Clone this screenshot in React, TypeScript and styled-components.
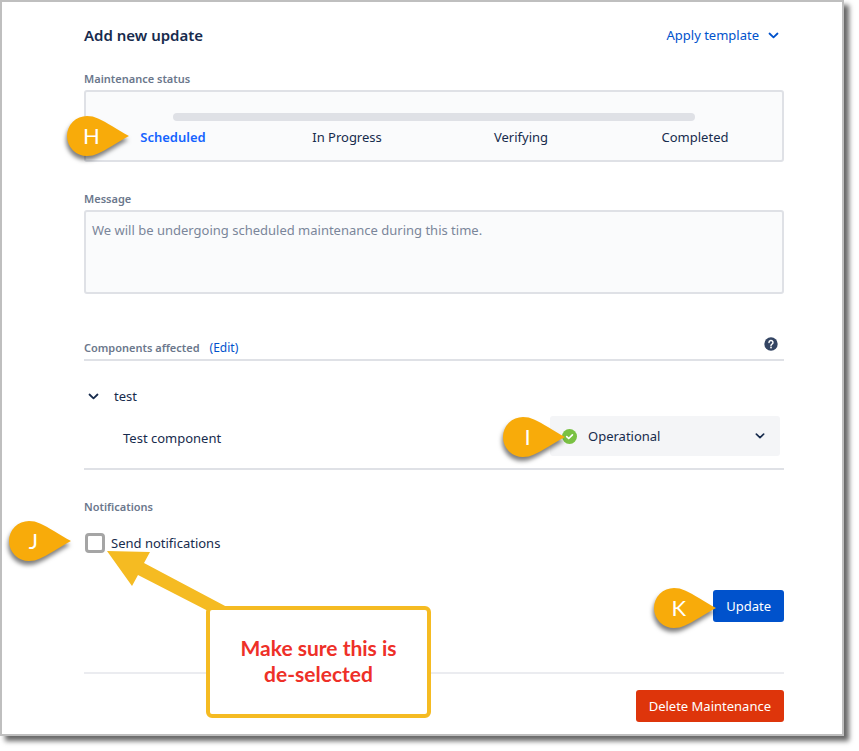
import React from "react";
import styled, { createGlobalStyle } from "styled-components";

const colors = {
  ink: "#172b4d",
  muted: "#6b778c",
  line: "#dfe1e6",
  field: "#fafbfc",
  link: "#0052cc",
  active: "#1463ff",
  danger: "#de350b",
  marker: "#f8ab0a",
  note: "#f5bb22",
};

const GlobalStyle = createGlobalStyle`
  *, *::before, *::after { box-sizing: border-box; }
  body {
    margin: 0;
    background: #fff;
    color: ${colors.ink};
    font-family: "Noto Sans", "Segoe UI", "Open Sans", sans-serif;
    font-size: 13px;
    line-height: 20px;
  }
  button, select, textarea, input { font: inherit; color: inherit; }
`;

const Frame = styled.main`
  margin: 0 15px 15px 0;
  padding: 23px 58px 12px 82px;
  border: 2px solid #bfbfbf;
  background: #fff;
  box-shadow: 5px 5px 5px 0 rgba(0, 0, 0, 0.6);
`;

const Header = styled.header`
  display: flex;
  align-items: center;
  justify-content: space-between;
  height: 20px;
  margin-bottom: 26px;
`;

const Title = styled.h1`
  margin: 0;
  font-size: 15px;
  font-weight: 600;
`;

const TemplateButton = styled.button`
  display: flex;
  align-items: center;
  gap: 9px;
  padding: 0 5px 0 0;
  border: 0;
  background: none;
  color: ${colors.link};
  cursor: pointer;
`;

const Section = styled.section<{ $space: number }>`
  margin-bottom: ${(p) => p.$space}px;
`;

const Caption = styled.h2`
  display: block;
  margin: 0;
  padding-bottom: 3px;
  font-size: 11px;
  font-weight: 600;
  line-height: 16px;
  color: ${colors.muted};
`;

const StatusBox = styled.div`
  position: relative;
  height: 72px;
  padding-top: 21px;
  border: 2px solid ${colors.line};
  border-radius: 3px;
  background: ${colors.field};
`;

const Track = styled.div`
  height: 8px;
  margin: 0 12.5%;
  border-radius: 4px;
  background: ${colors.line};
`;

const Steps = styled.div`
  display: grid;
  grid-template-columns: repeat(4, 1fr);
  padding-top: 6px;
`;

const Step = styled.button<{ $active?: boolean }>`
  padding: 0;
  border: 0;
  background: none;
  text-align: center;
  font-weight: ${(p) => (p.$active ? 600 : 400)};
  color: ${(p) => (p.$active ? colors.active : colors.ink)};
  cursor: pointer;
`;

const Message = styled.textarea`
  display: block;
  width: 100%;
  height: 84px;
  padding: 8px 6px;
  border: 2px solid ${colors.line};
  border-radius: 3px;
  background: ${colors.field};
  color: #7a869a;
  resize: none;
`;

const ComponentsHeader = styled.div`
  display: flex;
  align-items: flex-end;
  justify-content: space-between;
  height: 24px;
  border-bottom: 2px solid ${colors.line};
`;

const CaptionGroup = styled.div`
  display: flex;
  align-items: flex-start;
  gap: 10px;
`;

const EditLink = styled.a`
  font-size: 12px;
  line-height: 16px;
  color: ${colors.link};
  text-decoration: none;
`;

const HelpButton = styled.button`
  display: flex;
  align-self: flex-start;
  padding: 0 6px 0 0;
  border: 0;
  background: none;
  cursor: pointer;
`;

const ComponentsBody = styled.div`
  padding: 25px 0 12px;
  border-bottom: 2px solid ${colors.line};
`;

const GroupToggle = styled.button`
  display: flex;
  align-items: center;
  gap: 15px;
  margin-bottom: 10px;
  padding: 0 0 0 4px;
  border: 0;
  background: none;
  cursor: pointer;
`;

const ComponentRow = styled.div`
  display: flex;
  align-items: center;
  justify-content: space-between;
  padding: 0 4px 0 39px;
`;

const ComponentName = styled.label`
  padding-top: 4px;
`;

const SelectWrap = styled.div`
  position: relative;
  width: 230px;
`;

const StatusSelect = styled.select`
  display: block;
  width: 100%;
  height: 40px;
  padding: 0 38px;
  border: 0;
  border-radius: 3px;
  background: #f4f5f7;
  appearance: none;
`;

const SelectIcon = styled.span<{ $side: "left" | "right" }>`
  position: absolute;
  top: 0;
  bottom: 0;
  ${(p) => (p.$side === "left" ? "left: 12px;" : "right: 15px;")}
  display: flex;
  align-items: center;
  pointer-events: none;
`;

const CheckRow = styled.div`
  position: relative;
  display: flex;
  align-items: center;
  gap: 6px;
  width: fit-content;
  margin-top: 15px;
`;

const CheckBox = styled.input`
  width: 20px;
  height: 20px;
  margin: 0 0 0 1px;
  border: 3px solid #a5a5a5;
  border-radius: 4px;
  background: #fff;
  appearance: none;
`;

const Actions = styled.div`
  display: flex;
  justify-content: flex-end;
`;

const Anchor = styled.div`
  position: relative;
`;

const ActionButton = styled.button<{ $tone: string }>`
  height: 32px;
  padding: 0 13px;
  border: 0;
  border-radius: 3px;
  background: ${(p) => p.$tone};
  color: #fff;
  cursor: pointer;
`;

const Divider = styled.hr`
  height: 2px;
  margin: 50px 0 16px;
  border: 0;
  background: #ebecf0;
`;

const MarkerShape = styled.div<{ $left: number; $top: number }>`
  position: absolute;
  z-index: 2;
  left: ${(p) => p.$left}px;
  top: ${(p) => p.$top}px;
  width: 62px;
  height: 40px;
  pointer-events: none;

  svg {
    display: block;
    overflow: visible;
    filter: drop-shadow(-1px 4px 2px rgba(0, 0, 0, 0.5));
  }
`;

const MarkerLetter = styled.span`
  position: absolute;
  inset: 0 13px 0 0;
  display: flex;
  align-items: center;
  justify-content: center;
  color: #fff;
  font-family: "Segoe UI", Lato, sans-serif;
  font-size: 22px;
`;

const Note = styled.aside`
  position: absolute;
  z-index: 1;
  left: 122px;
  top: 73px;
  display: flex;
  align-items: center;
  justify-content: center;
  width: 225px;
  height: 112px;
  padding-bottom: 2px;
  border: 4px solid ${colors.note};
  border-radius: 6px;
  background: #fff;
  color: #ee3028;
  font-family: "Trebuchet MS", Lato, sans-serif;
  font-size: 21px;
  font-weight: 700;
  line-height: 26px;
  text-align: center;
`;

const NoteArrow = styled.svg`
  position: absolute;
  z-index: 1;
  left: 23px;
  top: 18px;
  pointer-events: none;
`;

function Chevron({ size = 11 }: { size?: number }) {
  return (
    <svg width={size} height={size} viewBox="0 0 11 11" fill="none" stroke="currentColor" strokeWidth="1.8" strokeLinecap="round" strokeLinejoin="round" aria-hidden="true">
      <path d="M1.5 3.5 5.5 7.3 9.5 3.5" />
    </svg>
  );
}

function Marker({ letter, left, top }: { letter: string; left: number; top: number }) {
  return (
    <MarkerShape $left={left} $top={top}>
      <svg width="62" height="40" viewBox="0 0 62 40" aria-hidden="true">
        <path d="M62 20C51 14 39 6 31 2.5C27.500 .8 24 0 20 0A20 20 0 0 0 20 40C24 40 27.500 39.200 31 37.500C39 34 51 26 62 20Z" fill={colors.marker} />
      </svg>
      <MarkerLetter>{letter}</MarkerLetter>
    </MarkerShape>
  );
}

const steps = ["Scheduled", "In Progress", "Verifying", "Completed"];

export default function App() {
  return (
    <>
      <GlobalStyle />
      <Frame>
        <Header>
          <Title>Add new update</Title>
          <TemplateButton type="button">
            Apply template <Chevron />
          </TemplateButton>
        </Header>

        <Section $space={29}>
          <Caption>Maintenance status</Caption>
          <StatusBox>
            <Track />
            <Steps>
              {steps.map((step, i) => (
                <Step key={step} type="button" $active={i === 0}>
                  {step}
                </Step>
              ))}
            </Steps>
            <Marker letter="H" left={-19} top={24} />
          </StatusBox>
        </Section>

        <Section $space={43}>
          <Caption as="label" htmlFor="message">
            Message
          </Caption>
          <Message id="message" defaultValue="We will be undergoing scheduled maintenance during this time." />
        </Section>

        <Section $space={29}>
          <ComponentsHeader>
            <CaptionGroup>
              <Caption>Components affected</Caption>
              <EditLink href="#edit">(Edit)</EditLink>
            </CaptionGroup>
            <HelpButton type="button" aria-label="Help">
              <svg width="14" height="14" viewBox="0 0 14 14" aria-hidden="true">
                <circle cx="7" cy="7" r="6.700" fill="#344563" />
                <path d="M5 5.500a2 1.900 0 1 1 3 1.600c-.7.4-1 .7-1 1.300" fill="none" stroke="#fff" strokeWidth="1.500" strokeLinecap="round" />
                <circle cx="7" cy="10.500" r=".9" fill="#fff" />
              </svg>
            </HelpButton>
          </ComponentsHeader>
          <ComponentsBody>
            <GroupToggle type="button" aria-expanded="true">
              <Chevron />
              test
            </GroupToggle>
            <ComponentRow>
              <ComponentName htmlFor="component-status">Test component</ComponentName>
              <SelectWrap>
                <StatusSelect id="component-status" defaultValue="Operational">
                  <option>Operational</option>
                </StatusSelect>
                <SelectIcon $side="left">
                  <svg width="15" height="15" viewBox="0 0 15 15" aria-hidden="true">
                    <circle cx="7.500" cy="7.500" r="7.500" fill="#7ac143" />
                    <path d="m4.700 7.600 2 1.900 3.700-3.700" fill="none" stroke="#fff" strokeWidth="1.700" strokeLinecap="round" strokeLinejoin="round" />
                  </svg>
                </SelectIcon>
                <SelectIcon $side="right">
                  <Chevron size={10} />
                </SelectIcon>
                <Marker letter="I" left={-47} top={1} />
              </SelectWrap>
            </ComponentRow>
          </ComponentsBody>
        </Section>

        <Section $space={37}>
          <Caption>Notifications</Caption>
          <CheckRow>
            <CheckBox type="checkbox" id="send-notifications" />
            <label htmlFor="send-notifications">Send notifications</label>
            <Marker letter="J" left={-75} top={-12} />
            <NoteArrow width="120" height="62" viewBox="0 0 120 62" aria-hidden="true">
              <path d="M0 0 43 1 37 12 120 56V62H105L31 24 25 35Z" fill={colors.note} />
            </NoteArrow>
            <Note>
              Make sure this is
              <br />
              de-selected
            </Note>
          </CheckRow>
        </Section>

        <Actions>
          <Anchor>
            <ActionButton type="button" $tone={colors.link}>
              Update
            </ActionButton>
            <Marker letter="K" left={-59} top={-2} />
          </Anchor>
        </Actions>
        <Divider />
        <Actions>
          <ActionButton type="button" $tone={colors.danger}>
            Delete Maintenance
          </ActionButton>
        </Actions>
      </Frame>
    </>
  );
}
